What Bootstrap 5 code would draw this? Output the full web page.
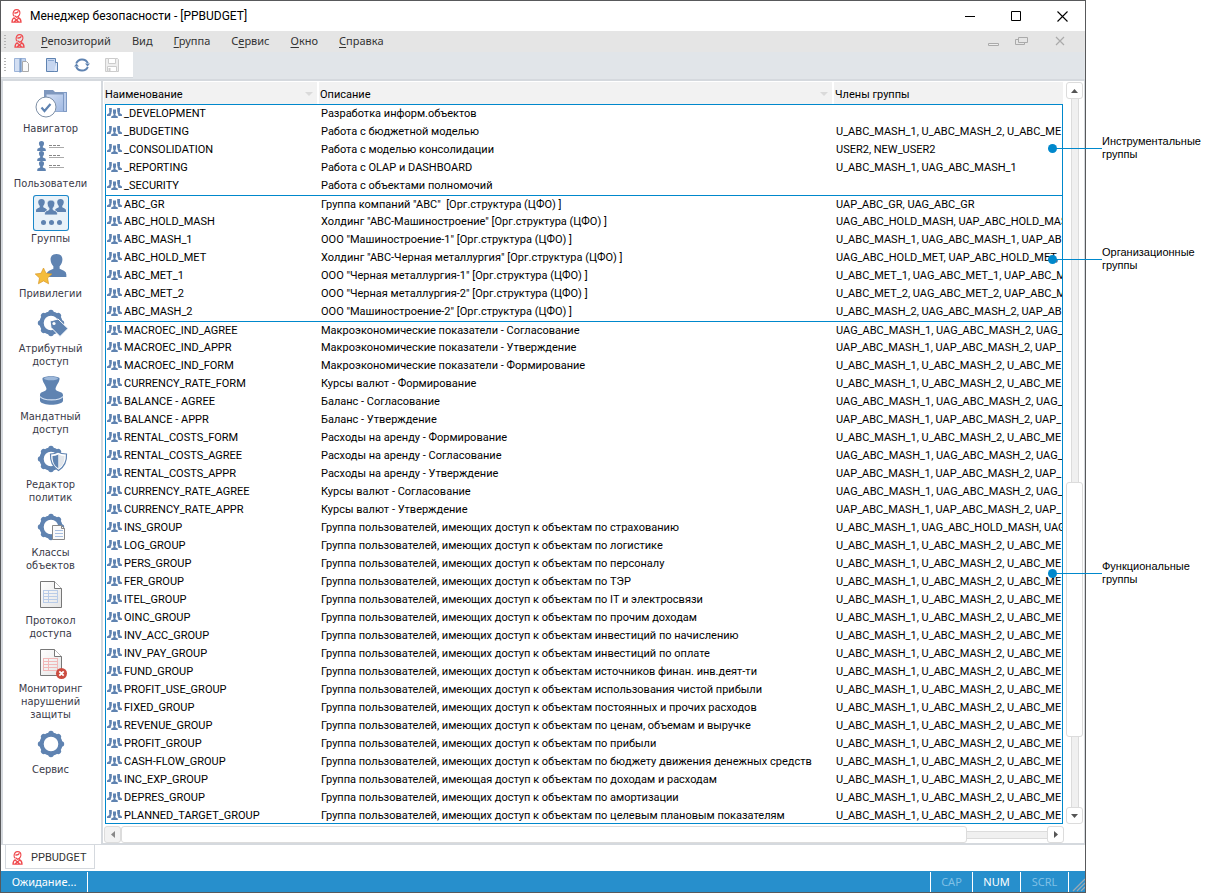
<!DOCTYPE html>
<html lang="ru">
<head>
<meta charset="utf-8">
<meta name="viewport" content="width=device-width, initial-scale=1">
<title>Менеджер безопасности - [PPBUDGET]</title>
<link href="https://cdn.jsdelivr.net/npm/bootstrap@5.3.0/dist/css/bootstrap.min.css" rel="stylesheet">
<style>
:root { --line: #d5d9de; --accent: #0088cc; --ink: #5f83b1; }
body { font: 11px/13px Roboto, "Liberation Sans", sans-serif; color: #000; background: #fff; }
button { background: none; border: 0; padding: 0; color: inherit; }
svg { display: block; flex: none; }
.app-window { border: 1px solid #58595b; min-width: 0; }
.title-bar { height: 30px; padding: 0 14px 0 10px; }
.title-bar h1 { font-size: 12px; line-height: 18px; font-weight: 400; }
.window-btns { gap: 28px; }
.window-btns button { width: 18px; height: 18px; display: grid; place-items: center; }
.menu-strip { height: 21px; background: #e5e5e5; font: 11px/16px "Noto Sans", sans-serif; padding: 0 17px 1px 3px; }
.menu-items { gap: 21px; }
.menu-strip a { color: #333; text-decoration: none; white-space: nowrap; }
.menu-strip u { text-underline-offset: 2px; }
.grip { width: 2px; height: 13px; background: repeating-linear-gradient(#b4b4b4 0 1px, transparent 1px 3px); }
.tool-strip { height: 27px; background: #e1e5e9; }
.tool-box { background: #fff; width: 132px; height: 26px; padding-left: 3px; border-bottom: 1px solid var(--line); }
.tool-btns { gap: 14px; padding: 1px 0 0 8px; }
.main-area { border-top: 2px solid var(--line); min-height: 0; }
.side-nav { width: 102px; flex: none; border: solid var(--line); border-width: 0 2px 1px; padding: 4px 3px 0 0; gap: 5px; font: 11px/13px "DejaVu Sans Condensed", sans-serif; color: #3a3a48; }
.side-nav button { display: flex; flex-direction: column; align-items: center; }
.nav-pic { width: 36px; height: 36px; border-radius: 3px; margin-bottom: 1px; }
.nav-pic.chosen { background: #e9f2f9; box-shadow: inset 0 0 0 1px #1b87c9; }
.list-pane { min-width: 0; padding: 1px 1px 0 1px; border: solid var(--line); border-width: 0 1px 2px 0; }
.list-top { min-height: 0; gap: 3px; }
.grid-table { table-layout: fixed; width: 100%; border-collapse: separate; border-spacing: 0; }
.grid-table th, .grid-table td { font-weight: 400; padding: 0; overflow: hidden; white-space: nowrap; text-align: left; }
.col-name { width: 214px; }
.col-info { width: 515px; }
.head-table .col-name { width: 215px; }
.grid-table th { background: #f2f2f2; height: 22px; border-right: 2px solid #fff; padding: 2px 4px 0 1px; }
.grid-table th:last-child { border-right: 0; }
.sort-mark { border: 4px solid transparent; border-top: 4px solid #dadada; border-bottom: 0; }
.rows-box { border: 1px solid var(--accent); margin-left: 1px; overflow: hidden; flex: 1 1 0; min-height: 0; }
.rows-box td { height: 18px; line-height: 18px; padding-left: 1px; }
.rows-box tbody + tbody tr:first-child td { border-top: 1px solid var(--accent); line-height: 17px; }
.rows-box svg { display: inline-block; vertical-align: -1px; margin-right: 2px; width: 15px; height: 10px; }
.bar-btn, .bar-thumb { border: 1px solid #dcdcdc; border-radius: 3px; background: #fff; }
.bar-btn { width: 17px; height: 17px; flex: none; display: grid; place-items: center; }
.bar-btn.at-end { background: #f2f2f2; }
.bar-track { background: #f0f0f0; border: 0 solid #dcdcdc; }
.v-bar .bar-track { width: 8px; border-width: 0 1px; }
.h-bar .bar-track { height: 8px; border-width: 1px 0; }
.v-bar { width: 17px; }
.h-bar { height: 17px; margin: 2px 19px 0 0; }
.v-bar .bar-thumb { width: 17px; flex: 255; }
.v-bar .before { flex: 385; }
.v-bar .after { flex: 70; }
.h-bar .bar-thumb { height: 17px; flex: 845; }
.h-bar .after { flex: 80; }
.tab-strip { height: 26px; padding-left: 4px; }
.doc-tab { border: 1px solid var(--line); border-top: 0; height: 24px; width: 90px; padding: 2px 0 0 6px; gap: 8px; color: #333; }
.status-strip { height: 21px; background: #278fcc; color: #fff; font: 11px/20px "Noto Sans", sans-serif; }
.status-strip span { border-right: 1px solid #fff; text-align: center; width: 48px; }
.status-strip .state-text { width: 87px; }
.status-strip .first-key { border-left: 1px solid #fff; width: 43px; }
.status-strip .muted-key { color: #7fc0e6; }
.notes { width: 123px; flex: none; font: 11px/13px "Liberation Sans", sans-serif; padding: 135px 0 0 16px; }
.notes p { margin: 0 0 85px; position: relative; }
.notes p + p { margin-bottom: 288px; }
.notes p::before { content: ""; position: absolute; left: -50px; width: 50px; top: 13px; height: 1px; background: var(--accent); }
.notes p::after { content: ""; position: absolute; left: -54px; top: 9px; width: 9px; height: 9px; border-radius: 50%; background: var(--accent); }
.notes p:last-child { margin-bottom: 0; }
</style>
</head>
<body>
<svg width="0" height="0" class="position-absolute" aria-hidden="true">
  <defs>
    <linearGradient id="sheet" x1="0" y1="0" x2="1" y2="1"><stop offset="0" stop-color="#fff"/><stop offset="1" stop-color="#e4e4e4"/></linearGradient>
    <linearGradient id="folder" x1="0" y1="0" x2="1" y2="1"><stop offset="0" stop-color="#d3dff4"/><stop offset="1" stop-color="#9fb8e2"/></linearGradient>
  </defs>
  <symbol id="person" viewBox="0 0 12 14"><path d="M6 0C8.500 0 9.700 1.400 9.600 3.500C9.500 5.200 8.800 6.600 7.900 7.400V9L10.500 10.200Q12 10.800 12 12.500V14H0V12.500Q0 10.800 1.500 10.200L4.100 9V7.400C3.200 6.600 2.500 5.200 2.400 3.500C2.300 1.400 3.500 0 6 0Z"/></symbol>
  <symbol id="trio" viewBox="0 0 15 10"><path fill="#5f83b1" d="M2 0h2.800v3.500L4.300 5v1H4L3.500 8H0V6.500L2.300 5zM10.200 0H13v3.500L12.700 5L15 6.500V8h-3.500L11 6h-.3V5l-.5-1.500zM6 1.500h3V5l-.6 1.200V7.300L10.800 8.500V10H4.200V8.500L6.600 7.300V6.200L6 5z"/></symbol>
  <symbol id="logo" viewBox="0 0 11 14"><g fill="none" stroke="#f04a4e" stroke-width="1.300"><path d="M3 7.200C1.800 5.800 2 3.200 3 1.800C4.200.4 7 .4 8.200 1.600C9.200 3 9 5.600 7.600 7L6.600 8.600M3.300 3.900C5 4.200 6.600 3.600 7.400 2.400M3.600 6.800L5.500 8.300L7 7.500M3.600 8.500C1.600 9.300 1 10.500 1 13.200H10C10 10.500 9.200 9.300 7.200 8.600M3.400 9.200L7.500 12.800M7.600 9.200L3.200 12.800"/></g></symbol>
  <symbol id="gear" viewBox="0 0 28 28"><g stroke="#5f83b1" stroke-width="5.400" stroke-linecap="round"><path d="M14 3.500v21M3.500 14h21M6.600 6.600l14.800 14.800M21.400 6.600L6.600 21.400"/></g><circle cx="14" cy="14" r="9.400" fill="#fff" stroke="#5f83b1" stroke-width="4.200"/></symbol>
  <symbol id="doc" viewBox="0 0 24 30"><path d="M1.500 1.500h14l7 7v19h-21z" fill="url(#sheet)" stroke="#777" stroke-width="1"/><path d="M15.500 1.500v7h7" fill="#fff" stroke="#777"/></symbol>
</svg>

<div class="d-flex vh-100">
  <div class="app-window d-flex flex-column flex-grow-1">
    <header class="title-bar d-flex align-items-center">
      <svg width="11" height="14"><use href="#logo"/></svg>
      <h1 class="mb-0 ms-2 me-auto">Менеджер безопасности - [PPBUDGET]</h1>
      <div class="window-btns d-flex">
        <button aria-label="Свернуть"><svg width="11" height="11"><path d="M0 5.500h10" stroke="#000"/></svg></button>
        <button aria-label="Развернуть"><svg width="11" height="11"><path d="M.5.500h9v9h-9z" fill="none" stroke="#000"/></svg></button>
        <button aria-label="Закрыть"><svg width="11" height="11"><path d="M.5.500l10 10M10.500.500l-10 10" stroke="#000" stroke-width="1.100"/></svg></button>
      </div>
    </header>

    <nav class="menu-strip d-flex align-items-center">
      <span class="grip me-1"></span>
      <svg width="11" height="14" class="ms-1 me-3"><use href="#logo"/></svg>
      <div class="menu-items d-flex me-auto">
        <a href="#"><u>Р</u>епозиторий</a><a href="#">Вид</a><a href="#"><u>Г</u>руппа</a><a href="#">С<u>е</u>рвис</a><a href="#"><u>О</u>кно</a><a href="#"><u>С</u>правка</a>
      </div>
      <button class="me-3" aria-label="Свернуть окно"><svg width="11" height="11"><path d="M.5 7.500h10v2h-10z" fill="#eee" stroke="#aaa"/></svg></button>
      <button class="me-4" aria-label="Восстановить окно"><svg width="13" height="10"><path d="M3.500 1.500h9v5h-9zM3.500 3.500h-3v5h9v-2" fill="none" stroke="#aaa"/></svg></button>
      <button aria-label="Закрыть окно"><svg width="16" height="10"><path d="M4 1l8 8M12 1L4 9" stroke="#aaa" stroke-width="1.200"/></svg></button>
    </nav>

    <div class="tool-strip">
      <div class="tool-box d-flex align-items-center">
        <span class="grip"></span>
        <div class="tool-btns d-flex">
          <button aria-label="Открыть"><svg width="16" height="16"><path d="M.5 1.500h11v13H.5z" fill="#c3d4ef" stroke="#9bb3d8"/><path d="M1 2h4v12H1z" fill="#d3dff3"/><path d="M7.500 1l-2 .8v14l2-.8z" fill="#7c9bc6"/><path d="M8.500 4.500h4l2 2v8h-6z" fill="#fafafa" stroke="#aaa"/></svg></button>
          <button aria-label="Закрыть репозиторий"><svg width="16" height="16"><path d="M2.500 1.500h9v13h-9z" fill="#c6d6f0" stroke="#5f83b1"/><path d="M11.500 5.500h2v9h-3" fill="#dfe8f8" stroke="#5f83b1"/><path d="M4 3.500h6" stroke="#8ba8d0"/></svg></button>
          <button aria-label="Обновить"><svg width="16" height="16" viewBox="0 0 16 16"><path d="M2.200 6.500A6.300 6.300 0 0 1 13.800 6.200M13.800 9.800A6.300 6.300 0 0 1 2.200 9.600" fill="none" stroke="#5f83b1" stroke-width="2"/><path d="M11 6.500h5L13.500 9.500zM0 9.500L2.500 6.500L5 9.500z" fill="#5f83b1"/></svg></button>
          <button aria-label="Сохранить" disabled><svg width="16" height="16"><path d="M1.500 1.500h12l1 1v12h-13z" fill="#eee" stroke="#ccc"/><path d="M4.500 1.500h7v5h-7zM3.500 9.500h9v5h-9z" fill="#fff" stroke="#ccc"/><path d="M5.500 11v3.500" stroke="#ccc" stroke-width="2"/></svg></button>
        </div>
      </div>
    </div>

    <main class="main-area d-flex flex-grow-1">
      <nav class="side-nav d-flex flex-column">
        <button><svg class="nav-pic" viewBox="0 0 36 36"><path d="M11 5h9l2 2h12v20H11z" fill="#7f98be"/><path d="M13.500 9.500h17v17h-17z" fill="url(#folder)"/><path d="M30.500 7.500h3v19h-3z" fill="#b9cbea" stroke="#7f9ac4"/><circle cx="13" cy="22" r="10" fill="#fff" stroke="#7d8fa6"/><path d="M8.500 22.500l3 3.500l6-7" fill="none" stroke="#5f83b1" stroke-width="2.200"/></svg>Навигатор</button>
        <button><svg class="nav-pic" viewBox="0 0 36 36"><g fill="#5f83b1"><use href="#person" x="4" y="1" width="9" height="10"/><use href="#person" x="4" y="11" width="9" height="10"/><use href="#person" x="4" y="21" width="9" height="10"/></g><path d="M16 5.500h11M16 15.500h11M16 25.500h11" stroke="#888" stroke-dasharray="3 1"/><path d="M16 7.500h15M16 17.500h15M16 27.500h15" stroke="#aaa"/></svg>Пользователи</button>
        <button><svg class="nav-pic chosen" viewBox="0 0 36 36"><g fill="#5f83b1"><use href="#person" x="3" y="4" width="11" height="13"/><use href="#person" x="22" y="4" width="11" height="13"/><use href="#person" x="10" y="5" width="16" height="15" stroke="#e9f2f9" stroke-width=".8"/><circle cx="10.500" cy="27.500" r="2.500"/><circle cx="18.500" cy="27.500" r="2.500"/><circle cx="26.500" cy="27.500" r="2.500"/></g></svg>Группы</button>
        <button><svg class="nav-pic" viewBox="0 0 36 36"><use href="#person" x="13" y="4" width="21" height="23" fill="#5f83b1"/><path d="M10.500 18l2.500 5.300l5.800.7l-4.300 4l1.100 5.800l-5.100-2.900l-5.100 2.900l1.100-5.800l-4.300-4l5.800-.7z" fill="#f5bd3c" stroke="#d99a2b" stroke-width=".7"/></svg>Привилегии</button>
        <button><svg class="nav-pic" viewBox="0 0 36 36"><use href="#gear" x="4" y="4" width="28" height="28"/><path d="M17 16l8-2l10 9.500l-8 8l-9-9z" fill="#5f83b1" stroke="#fff"/><circle cx="21" cy="18.500" r="1.600" fill="#fff"/></svg>Атрибутный<br>доступ</button>
        <button><svg class="nav-pic" viewBox="0 0 36 36"><path d="M9.500 5C12 2.500 24 2.500 26.500 5C27 9 23 12 22.500 16C23 19 30 18 30 22V28C28 33 9 33 7 28V22C7 18 13 19 13.500 16C13 12 9 9 9.500 5Z" fill="#5f83b1"/><ellipse cx="18" cy="5.500" rx="7" ry="1.800" fill="#9db8da"/><path d="M7 23.500C10 28 27 28 30 23.500" fill="none" stroke="#d6e2f2" stroke-width="1.200"/></svg>Мандатный<br>доступ</button>
        <button><svg class="nav-pic" viewBox="0 0 36 36"><use href="#gear" x="4" y="4" width="28" height="28"/><path d="M17.500 13Q22 13 25 11Q28 13 33.500 13C34 21 31 26 25.500 29.500C20 26 17 21 17.500 13Z" fill="#fff" stroke="#5f83b1" stroke-width="1.200"/><path d="M25.500 13.500Q22 15 19.500 15C19.500 21 21 24.500 25.500 27.500Z" fill="#5f83b1"/><path d="M25.500 13.500Q29 15 31.500 15C31.500 21 30 24.500 25.500 27.500Z" fill="#e2e6eb"/></svg>Редактор<br>политик</button>
        <button><svg class="nav-pic" viewBox="0 0 36 36"><use href="#gear" x="4" y="4" width="28" height="28"/><path d="M19.500 16.500h9l3 3v11h-12z" fill="#fafafa" stroke="#888"/><path d="M22 21.500h8M22 24.500h8M22 27.500h8" stroke="#a8bfe0"/><path d="M28.500 16.500v3h3" fill="none" stroke="#888"/></svg>Классы<br>объектов</button>
        <button><svg class="nav-pic" viewBox="0 0 36 36"><use href="#doc" x="6" y="3" width="24" height="30"/><path d="M10 13.500h15M10 16.500h15M10 19.500h15M10 22.500h15M10 25.500h15M10.500 13v13M15.500 13v13M24.500 13v13" stroke="#b9cce8"/></svg>Протокол<br>доступа</button>
        <button><svg class="nav-pic" viewBox="0 0 36 36"><use href="#doc" x="6" y="3" width="24" height="30"/><path d="M10 13.500h15M10 16.500h15M10 19.500h15M10 22.500h15M10 25.500h15M10.500 13v13M15.500 13v13M24.500 13v13" stroke="#f1b8b8"/><circle cx="28.500" cy="28.500" r="5.500" fill="#cb4c40"/><path d="M26.300 26.300l4.400 4.400M30.700 26.300l-4.400 4.400" stroke="#fff" stroke-width="1.800"/></svg>Мониторинг<br>нарушений<br>защиты</button>
        <button><svg class="nav-pic" viewBox="0 0 36 36"><use href="#gear" x="4" y="4" width="28" height="28"/></svg>Сервис</button>
      </nav>

      <section class="list-pane d-flex flex-column flex-grow-1">
        <div class="list-top d-flex flex-grow-1">
          <div class="d-flex flex-column flex-grow-1 overflow-hidden">
            <table class="grid-table head-table">
              <colgroup><col class="col-name"><col class="col-info"><col></colgroup>
              <thead><tr>
                <th><div class="d-flex align-items-center justify-content-between">Наименование<i class="sort-mark"></i></div></th>
                <th><div class="d-flex align-items-center justify-content-between">Описание<i class="sort-mark"></i></div></th>
                <th>Члены группы</th>
              </tr></thead>
            </table>
            <div class="rows-box">
              <table class="grid-table" aria-label="Группы">
                <colgroup><col class="col-name"><col class="col-info"><col></colgroup>
                <tbody>
<tr><td><svg><use href="#trio"/></svg>_DEVELOPMENT</td><td>Разработка информ.объектов</td><td></td></tr>
<tr><td><svg><use href="#trio"/></svg>_BUDGETING</td><td>Работа с бюджетной моделью</td><td>U_ABC_MASH_1, U_ABC_MASH_2, U_ABC_ME</td></tr>
<tr><td><svg><use href="#trio"/></svg>_CONSOLIDATION</td><td>Работа с моделью консолидации</td><td>USER2, NEW_USER2</td></tr>
<tr><td><svg><use href="#trio"/></svg>_REPORTING</td><td>Работа с OLAP и DASHBOARD</td><td>U_ABC_MASH_1, UAG_ABC_MASH_1</td></tr>
<tr><td><svg><use href="#trio"/></svg>_SECURITY</td><td>Работа с объектами полномочий</td><td></td></tr>
                </tbody>
                <tbody>
<tr><td><svg><use href="#trio"/></svg>ABC_GR</td><td>Группа компаний "АВС"&nbsp; [Орг.структура (ЦФО) ]</td><td>UAP_ABC_GR, UAG_ABC_GR</td></tr>
<tr><td><svg><use href="#trio"/></svg>ABC_HOLD_MASH</td><td>Холдинг "АВС-Машиностроение" [Орг.структура (ЦФО) ]</td><td>UAG_ABC_HOLD_MASH, UAP_ABC_HOLD_MAS</td></tr>
<tr><td><svg><use href="#trio"/></svg>ABC_MASH_1</td><td>ООО "Машиностроение-1" [Орг.структура (ЦФО) ]</td><td>U_ABC_MASH_1, UAG_ABC_MASH_1, UAP_AB</td></tr>
<tr><td><svg><use href="#trio"/></svg>ABC_HOLD_MET</td><td>Холдинг "АВС-Черная металлургия" [Орг.структура (ЦФО) ]</td><td>UAG_ABC_HOLD_MET, UAP_ABC_HOLD_MET,</td></tr>
<tr><td><svg><use href="#trio"/></svg>ABC_MET_1</td><td>ООО "Черная металлургия-1" [Орг.структура (ЦФО) ]</td><td>U_ABC_MET_1, UAG_ABC_MET_1, UAP_ABC_M</td></tr>
<tr><td><svg><use href="#trio"/></svg>ABC_MET_2</td><td>ООО "Черная металлургия-2" [Орг.структура (ЦФО) ]</td><td>U_ABC_MET_2, UAG_ABC_MET_2, UAP_ABC_M</td></tr>
<tr><td><svg><use href="#trio"/></svg>ABC_MASH_2</td><td>ООО "Машиностроение-2" [Орг.структура (ЦФО) ]</td><td>U_ABC_MASH_2, UAG_ABC_MASH_2, UAP_AB</td></tr>
                </tbody>
                <tbody>
<tr><td><svg><use href="#trio"/></svg>MACROEC_IND_AGREE</td><td>Макроэкономические показатели - Согласование</td><td>UAG_ABC_MASH_1, UAG_ABC_MASH_2, UAG_</td></tr>
<tr><td><svg><use href="#trio"/></svg>MACROEC_IND_APPR</td><td>Макроэкономические показатели - Утверждение</td><td>UAP_ABC_MASH_1, UAP_ABC_MASH_2, UAP_</td></tr>
<tr><td><svg><use href="#trio"/></svg>MACROEC_IND_FORM</td><td>Макроэкономические показатели - Формирование</td><td>U_ABC_MASH_1, U_ABC_MASH_2, U_ABC_ME</td></tr>
<tr><td><svg><use href="#trio"/></svg>CURRENCY_RATE_FORM</td><td>Курсы валют - Формирование</td><td>U_ABC_MASH_1, U_ABC_MASH_2, U_ABC_ME</td></tr>
<tr><td><svg><use href="#trio"/></svg>BALANCE - AGREE</td><td>Баланс - Согласование</td><td>UAG_ABC_MASH_1, UAG_ABC_MASH_2, UAG_</td></tr>
<tr><td><svg><use href="#trio"/></svg>BALANCE - APPR</td><td>Баланс - Утверждение</td><td>UAP_ABC_MASH_1, UAP_ABC_MASH_2, UAP_</td></tr>
<tr><td><svg><use href="#trio"/></svg>RENTAL_COSTS_FORM</td><td>Расходы на аренду - Формирование</td><td>U_ABC_MASH_1, U_ABC_MASH_2, U_ABC_ME</td></tr>
<tr><td><svg><use href="#trio"/></svg>RENTAL_COSTS_AGREE</td><td>Расходы на аренду - Согласование</td><td>UAG_ABC_MASH_1, UAG_ABC_MASH_2, UAG_</td></tr>
<tr><td><svg><use href="#trio"/></svg>RENTAL_COSTS_APPR</td><td>Расходы на аренду - Утверждение</td><td>UAP_ABC_MASH_1, UAP_ABC_MASH_2, UAP_</td></tr>
<tr><td><svg><use href="#trio"/></svg>CURRENCY_RATE_AGREE</td><td>Курсы валют - Согласование</td><td>UAG_ABC_MASH_1, UAG_ABC_MASH_2, UAG_</td></tr>
<tr><td><svg><use href="#trio"/></svg>CURRENCY_RATE_APPR</td><td>Курсы валют - Утверждение</td><td>UAP_ABC_MASH_1, UAP_ABC_MASH_2, UAP_</td></tr>
<tr><td><svg><use href="#trio"/></svg>INS_GROUP</td><td>Группа пользователей, имеющих доступ к объектам по страхованию</td><td>U_ABC_MASH_1, UAG_ABC_HOLD_MASH, UAG</td></tr>
<tr><td><svg><use href="#trio"/></svg>LOG_GROUP</td><td>Группа пользователей, имеющих доступ к объектам по логистике</td><td>U_ABC_MASH_1, U_ABC_MASH_2, U_ABC_ME</td></tr>
<tr><td><svg><use href="#trio"/></svg>PERS_GROUP</td><td>Группа пользователей, имеющих доступ к объектам по персоналу</td><td>U_ABC_MASH_1, U_ABC_MASH_2, U_ABC_ME</td></tr>
<tr><td><svg><use href="#trio"/></svg>FER_GROUP</td><td>Группа пользователей, имеющих доступ к объектам по ТЭР</td><td>U_ABC_MASH_1, U_ABC_MASH_2, U_ABC_ME</td></tr>
<tr><td><svg><use href="#trio"/></svg>ITEL_GROUP</td><td>Группа пользователей, имеющих доступ к объектам по IT и электросвязи</td><td>U_ABC_MASH_1, U_ABC_MASH_2, U_ABC_ME</td></tr>
<tr><td><svg><use href="#trio"/></svg>OINC_GROUP</td><td>Группа пользователей, имеющих доступ к объектам по прочим доходам</td><td>U_ABC_MASH_1, U_ABC_MASH_2, U_ABC_ME</td></tr>
<tr><td><svg><use href="#trio"/></svg>INV_ACC_GROUP</td><td>Группа пользователей, имеющих доступ к объектам инвестиций по начислению</td><td>U_ABC_MASH_1, U_ABC_MASH_2, U_ABC_ME</td></tr>
<tr><td><svg><use href="#trio"/></svg>INV_PAY_GROUP</td><td>Группа пользователей, имеющих доступ к объектам инвестиций по оплате</td><td>U_ABC_MASH_1, U_ABC_MASH_2, U_ABC_ME</td></tr>
<tr><td><svg><use href="#trio"/></svg>FUND_GROUP</td><td>Группа пользователей, имеющих доступ к объектам источников финан. инв.деят-ти</td><td>U_ABC_MASH_1, U_ABC_MASH_2, U_ABC_ME</td></tr>
<tr><td><svg><use href="#trio"/></svg>PROFIT_USE_GROUP</td><td>Группа пользователей, имеющих доступ к объектам использования чистой прибыли</td><td>U_ABC_MASH_1, U_ABC_MASH_2, U_ABC_ME</td></tr>
<tr><td><svg><use href="#trio"/></svg>FIXED_GROUP</td><td>Группа пользователей, имеющих доступ к объектам постоянных и прочих расходов</td><td>U_ABC_MASH_1, U_ABC_MASH_2, U_ABC_ME</td></tr>
<tr><td><svg><use href="#trio"/></svg>REVENUE_GROUP</td><td>Группа пользователей, имеющих доступ к объектам по ценам, объемам и выручке</td><td>U_ABC_MASH_1, U_ABC_MASH_2, U_ABC_ME</td></tr>
<tr><td><svg><use href="#trio"/></svg>PROFIT_GROUP</td><td>Группа пользователей, имеющих доступ к объектам по прибыли</td><td>U_ABC_MASH_1, U_ABC_MASH_2, U_ABC_ME</td></tr>
<tr><td><svg><use href="#trio"/></svg>CASH-FLOW_GROUP</td><td>Группа пользователей, имеющих доступ к объектам по бюджету движения денежных средств</td><td>U_ABC_MASH_1, U_ABC_MASH_2, U_ABC_ME</td></tr>
<tr><td><svg><use href="#trio"/></svg>INC_EXP_GROUP</td><td>Группа пользователей, имеющая доступ к объектам по доходам и расходам</td><td>U_ABC_MASH_1, U_ABC_MASH_2, U_ABC_ME</td></tr>
<tr><td><svg><use href="#trio"/></svg>DEPRES_GROUP</td><td>Группа пользователей, имеющих доступ к объектам по амортизации</td><td>U_ABC_MASH_1, U_ABC_MASH_2, U_ABC_ME</td></tr>
<tr><td><svg><use href="#trio"/></svg>PLANNED_TARGET_GROUP</td><td>Группа пользователей, имеющих доступ к объектам по целевым плановым показателям</td><td>U_ABC_MASH_1, U_ABC_MASH_2, U_ABC_ME</td></tr>
                </tbody>
              </table>
            </div>
          </div>
          <div class="v-bar d-flex flex-column align-items-center">
            <button class="bar-btn" aria-label="Вверх"><svg width="7" height="4"><path d="M0 4l3.500-4L7 4z" fill="#555"/></svg></button>
            <div class="bar-track before"></div><div class="bar-thumb"></div><div class="bar-track after"></div>
            <button class="bar-btn" aria-label="Вниз"><svg width="7" height="4"><path d="M0 0l3.500 4L7 0z" fill="#555"/></svg></button>
          </div>
        </div>
        <div class="h-bar d-flex align-items-center">
          <button class="bar-btn at-end" aria-label="Влево"><svg width="4" height="7"><path d="M4 0L0 3.500L4 7z" fill="#888"/></svg></button>
          <div class="bar-thumb"></div><div class="bar-track after"></div>
          <button class="bar-btn" aria-label="Вправо"><svg width="4" height="7"><path d="M0 0l4 3.500L0 7z" fill="#555"/></svg></button>
        </div>
      </section>
    </main>

    <div class="tab-strip">
      <button class="doc-tab d-flex align-items-center"><svg width="11" height="14"><use href="#logo"/></svg>PPBUDGET</button>
    </div>

    <footer class="status-strip d-flex align-items-center">
      <span class="state-text me-auto">Ожидание...</span>
      <span class="muted-key first-key">CAP</span>
      <span>NUM</span>
      <span class="muted-key">SCRL</span>
      <svg width="16" height="21"><path d="M4 20L16 8M8 20L16 12M12 20L16 16" stroke="#9aa9b5" stroke-width="1.300"/></svg>
    </footer>
  </div>

  <aside class="notes">
    <p>Инструментальные<br>группы</p>
    <p>Организационные<br>группы</p>
    <p>Функциональные<br>группы</p>
  </aside>
</div>
<script src="https://cdn.jsdelivr.net/npm/bootstrap@5.3.0/dist/js/bootstrap.bundle.min.js"></script>
</body>
</html>
